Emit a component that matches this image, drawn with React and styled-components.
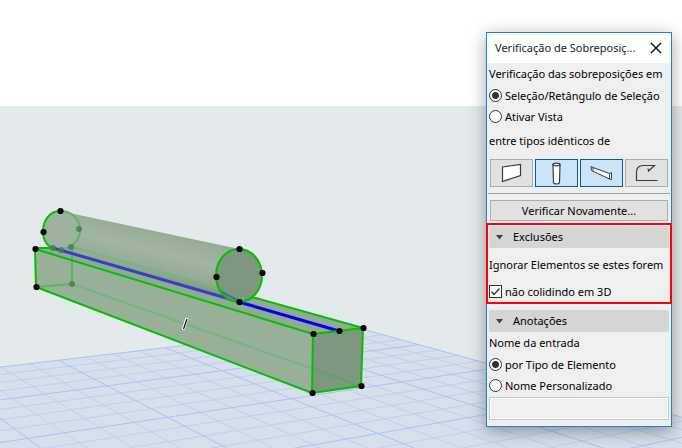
import React, { useState } from "react";
import styled, { createGlobalStyle } from "styled-components";

const GlobalStyle = createGlobalStyle`
  * { box-sizing: border-box; }
  body {
    margin: 0;
    background: #fff;
    color: #000;
    font: 11px/16px "Noto Sans", "Open Sans", sans-serif;
  }
  button, input { font: inherit; color: inherit; }
`;

const Page = styled.main`
  position: relative;
  min-height: 100vh;
  padding-top: 106px;
  overflow: hidden;
  display: flex;
`;

const Viewport = styled.section`
  flex: 1;
  display: flex;
  background: #e4e9eb;
`;

const Drawing = styled.svg`
  flex: 1;
  width: 100%;
  display: block;
`;

const Palette = styled.aside`
  position: absolute;
  top: 32px;
  right: 10px;
  width: 186px;
  padding-bottom: 6px;
  background: #efefef;
  border: 1px solid #1883d7;
  box-shadow: 0 4px 16px rgba(0, 0, 0, 0.36);
`;

const TitleBar = styled.header`
  display: flex;
  align-items: center;
  justify-content: space-between;
  height: 30px;
  padding: 0 8px;
  background: #fff;
`;

const Title = styled.h1`
  margin: 0;
  color: #222;
  font: 400 11px/16px "Noto Sans", "Open Sans", sans-serif;
  white-space: nowrap;
`;

const CloseButton = styled.button`
  display: grid;
  place-items: center;
  width: 14px;
  height: 14px;
  padding: 0;
  border: 0;
  background: none;
`;

const Group = styled.fieldset`
  min-width: 0;
  margin: 0;
  padding: 0 ${(p) => (p.$inset === undefined ? 2 : p.$inset)}px;
  border: 0;
`;

const Caption = styled.div`
  display: flex;
  align-items: center;
  height: ${(p) => p.$height || 23}px;
  white-space: nowrap;
`;

const Option = styled.label`
  display: flex;
  align-items: center;
  gap: 3px;
  height: 21px;
  white-space: nowrap;
`;

const Radio = styled.input`
  appearance: none;
  flex: none;
  width: 13px;
  height: 13px;
  margin: 0;
  border: 1px solid #333;
  border-radius: 50%;
  background: #fff;
  &:checked { background: radial-gradient(circle, #333 3px, #fff 4px); }
`;

const CheckFrame = styled.span`
  display: grid;
  flex: none;
  width: 13px;
  height: 13px;
  > * { grid-area: 1 / 1; }
  svg { pointer-events: none; z-index: 1; }
  input:not(:checked) + svg { display: none; }
`;

const Checkbox = styled.input`
  appearance: none;
  width: 13px;
  height: 13px;
  margin: 0;
  border: 1px solid #333;
  background: #fff;
`;

const Tools = styled.div`
  display: grid;
  grid-template-columns: repeat(4, 1fr);
  gap: 2px;
  padding: 4px 3px 6px;
`;

const Tool = styled.button`
  display: grid;
  place-items: center;
  height: 28px;
  padding: 0;
  border: 1px solid ${(p) => (p.$on ? "#0a5a9c" : "#adadad")};
  background: ${(p) => (p.$on ? "#cce4f8" : "#e1e1e1")};
`;

const Divider = styled.hr`
  height: 1px;
  margin: 0 1px 6px;
  border: 0;
  background: #a0a0a0;
`;

const CheckAgain = styled.button`
  display: block;
  width: calc(100% - 6px);
  height: 21px;
  margin: 0 3px 2px;
  padding: 0;
  border: 1px solid #adadad;
  background: #e1e1e1;
`;

const Highlight = styled.section`
  position: relative;
  margin: 0 -1px 6px;
  padding: 1px 0 0;
  border: 2px solid #f00;
`;

const SectionHead = styled.button`
  display: flex;
  align-items: center;
  gap: 10px;
  width: calc(100% - ${(p) => p.$inset * 2}px);
  height: 22px;
  margin: 0 ${(p) => p.$inset}px;
  padding: 0 7px;
  border: 0;
  border-radius: 2px;
  background: #d5d5d5;
`;

const NameField = styled.input`
  display: block;
  width: 100%;
  height: 23px;
  margin-top: 1px;
  padding: 0 4px;
  border: 1px solid #c6c6c6;
  box-shadow: inset 0 0 0 1px #fff;
  background: #efefef;
`;

/* Perspective ground plane: s runs towards the viewer, t runs to the right. */
const depth = (s, t) => 1 - 0.1887 * s + 0.05 * t;
const project = (s, t) => {
  const w = depth(s, t);
  return [(77.75 * s + 115 * t + 58.3) / w, (-21.76 * s + 4.8 * t + 360.3) / w];
};

function gridLines() {
  const lines = [];
  for (let i = 0; i <= 32; i++) {
    const s = i / 8;
    const start = Math.max(-4, (0.15 - 1 + 0.1887 * s) / 0.05);
    lines.push({ key: `a${i}`, bold: i % 4 === 0, from: project(s, start), to: project(s, 3) });
  }
  for (let j = -14; j <= 12; j++) {
    const t = j / 4;
    const end = (1 + 0.05 * t - 0.15) / 0.1887;
    lines.push({ key: `b${j}`, bold: j % 4 === 0, from: project(0, t), to: project(end, t) });
  }
  return lines.sort((a, b) => a.bold - b.bold);
}

const GRID = gridLines();
const GROUND = [project(0, -4), project(0, 3), project(3.5, 3), [682, 900], [-400, 900]]
  .map((p) => p.join(","))
  .join(" ");

const NODES = [
  [60, 211], [43, 232], [35, 249], [36, 287], [239, 249], [216, 277], [262, 273],
  [239, 302], [313, 334], [339, 331], [363, 328], [312, 393], [361, 386],
];
const HIDDEN_NODES = [[79, 229], [71, 247], [72, 284], [53, 248], [61, 250]];

function Scene() {
  return (
    <Drawing viewBox="0 106 682 342" preserveAspectRatio="xMinYMin slice" role="img" aria-label="Vista 3D">
      <defs>
        <linearGradient id="tube" gradientUnits="userSpaceOnUse" x1="150" y1="226" x2="138" y2="278">
          <stop offset="0" stopColor="#8fa38f" />
          <stop offset="0.14" stopColor="#99af9a" />
          <stop offset="0.45" stopColor="#a0b6a0" />
          <stop offset="0.78" stopColor="#95ab96" />
          <stop offset="1" stopColor="#7e947f" />
        </linearGradient>
      </defs>
      <polygon points={GROUND} fill="#d6dfeb" />
      <g strokeWidth="1">
        {GRID.map((l) => (
          <line
            key={l.key}
            x1={l.from[0]}
            y1={l.from[1]}
            x2={l.to[0]}
            y2={l.to[1]}
            stroke={l.bold ? "#aac3ef" : "#c0d0ea"}
          />
        ))}
      </g>
      <polygon points="35,249 71,247 363,328 361,386 312,393 36,287" fill="#98af98" />
      <polygon points="35,249 71,247 363,328 313,334" fill="#92a994" />
      <polygon points="313,334 363,328 361,386 312,393" fill="#80977f" />
      <path d="M60 211L239 249L239 302L54 248C48 247 43 241 43 232C43 220 50 211 60 211Z" fill="url(#tube)" />
      <path d="M60 211C50 211 43 220 43 232C43 241 48 247 54 248L62 250C74 248 80 239 80 230C80 219 72 211 60 211Z" fill="#9db39e" />
      <g fill="none" stroke="#5fb364" strokeWidth="2">
        <path d="M60 211C72 211 80 219 80 230C80 239 74 247 62 249" />
        <path d="M72 247V284L36 287" />
      </g>
      <path d="M72 247L254 298M72 284L313 369" fill="none" stroke="#79b47c" strokeWidth="2" />
      <path d="M313 369L361 386" stroke="#659f67" strokeWidth="2" />
      <path d="M53 248L240 302" stroke="#3441c4" strokeWidth="3" />
      <path d="M239 302L339 331" stroke="#0000fa" strokeWidth="3" />
      <ellipse cx="239" cy="275.5" rx="23" ry="26.5" fill="#80977f" />
      <path d="M220 291L239 301" stroke="#52679a" strokeWidth="2" />
      <path d="M217 287L254 298" stroke="#6d9f70" strokeWidth="2" />
      <g fill="none" stroke="#00c000" strokeWidth="2" strokeLinejoin="round">
        <path d="M60 211C50 211 43 220 43 232C43 241 48 247 54 248H35V249L36 287L312 393L313 334L35 249" />
        <path d="M313 334L363 328L361 386L312 393M363 328L252 297" />
        <ellipse cx="239" cy="275.5" rx="23" ry="26.5" />
      </g>
      {HIDDEN_NODES.map(([x, y]) => (
        <circle key={`${x}-${y}`} cx={x} cy={y} r="3" fill="#4c794f" fillOpacity="0.8" />
      ))}
      {NODES.map(([x, y]) => (
        <circle key={`${x}-${y}`} cx={x + 0.5} cy={y} r="3.1" fill="#000" />
      ))}
      <path d="M183 330L187 318" stroke="#fff" strokeWidth="3" />
      <path d="M183.5 329L187 319" stroke="#000" strokeWidth="1.2" />
    </Drawing>
  );
}

const TOOLS = [
  { name: "Parede", on: false, art: <path d="M3.5 7L21.5 4.5V15.500L3.500 21.500Z" fill="#fff" /> },
  {
    name: "Pilar",
    on: true,
    art: (
      <>
        <path d="M9 4.500L9.500 22.500C10 24.500 15 24.500 15.500 22.500L16 4.500Z" fill="#fff" />
        <ellipse cx="12.500" cy="4.500" rx="3.500" ry="1.300" fill="#fff" />
      </>
    ),
  },
  {
    name: "Viga",
    on: true,
    art: (
      <path
        d="M2 6.500L4 7.500L20.500 13.500L22.500 12.500V19.500L20.500 19L3.500 11L2.500 10.500ZM20.500 13.500V19M4 7.500V11"
        fill="#fff"
        strokeWidth="1"
      />
    ),
  },
  {
    name: "Laje",
    on: false,
    art: <path d="M23.500 20.500H2.500V12C2.500 8 5 5.500 9 5.500H20.500L14.500 11L14 8.500" fill="none" />,
  },
];

function ToolArt({ children }) {
  return (
    <svg width="26" height="26" viewBox="0 0 26 26" stroke="#333c44" strokeWidth="1.200" aria-hidden="true">
      {children}
    </svg>
  );
}

function Heading({ children, inset, open, onToggle }) {
  return (
    <SectionHead type="button" $inset={inset} aria-expanded={open} onClick={onToggle}>
      <svg width="7" height="5" viewBox="0 0 7 5" aria-hidden="true">
        <path d="M0 0H7L3.500 4.500Z" fill="#404040" />
      </svg>
      {children}
    </SectionHead>
  );
}

export default function App() {
  const [tools, setTools] = useState(TOOLS.map((t) => t.on));
  const [exclusions, setExclusions] = useState(true);
  const [notes, setNotes] = useState(true);

  return (
    <>
      <GlobalStyle />
      <Page>
        <Viewport>
          <Scene />
        </Viewport>
        <Palette>
          <TitleBar>
            <Title>Verificação de Sobreposiç...</Title>
            <CloseButton type="button" aria-label="Fechar">
              <svg width="12" height="12" viewBox="0 0 12 12" aria-hidden="true">
                <path d="M1 1L11 11M11 1L1 11" stroke="#000" strokeWidth="1.200" />
              </svg>
            </CloseButton>
          </TitleBar>
          <Group aria-labelledby="scope">
            <Caption $height={22} id="scope">Verificação das sobreposições em</Caption>
            <Option>
              <Radio type="radio" name="scope" defaultChecked />
              Seleção/Retângulo de Seleção
            </Option>
            <Option>
              <Radio type="radio" name="scope" />
              Ativar Vista
            </Option>
            <Caption $height={28} id="types">entre tipos idênticos de</Caption>
          </Group>
          <Tools role="group" aria-labelledby="types">
            {TOOLS.map((tool, i) => (
              <Tool
                key={tool.name}
                type="button"
                aria-label={tool.name}
                aria-pressed={tools[i]}
                $on={tools[i]}
                onClick={() => setTools(tools.map((on, k) => (k === i ? !on : on)))}
              >
                <ToolArt>{tool.art}</ToolArt>
              </Tool>
            ))}
          </Tools>
          <Divider />
          <CheckAgain type="button">Verificar Novamente...</CheckAgain>
          <Highlight>
            <Heading inset={1} open={exclusions} onToggle={() => setExclusions(!exclusions)}>
              Exclusões
            </Heading>
            {exclusions && (
              <Group $inset={1} aria-labelledby="ignore">
                <Caption $height={33} id="ignore">Ignorar Elementos se estes forem</Caption>
                <Option>
                  <CheckFrame>
                    <Checkbox type="checkbox" defaultChecked />
                    <svg width="13" height="13" viewBox="0 0 13 13" aria-hidden="true">
                      <path d="M2.500 6.500L5 9.500L10.500 3.500" fill="none" stroke="#333" strokeWidth="1.300" />
                    </svg>
                  </CheckFrame>
                  não colidindo em 3D
                </Option>
              </Group>
            )}
          </Highlight>
          <Heading inset={2} open={notes} onToggle={() => setNotes(!notes)}>
            Anotações
          </Heading>
          {notes && (
            <Group aria-labelledby="entry">
              <Caption $height={22} id="entry">Nome da entrada</Caption>
              <Option>
                <Radio type="radio" name="entry" defaultChecked />
                por Tipo de Elemento
              </Option>
              <Option>
                <Radio type="radio" name="entry" />
                Nome Personalizado
              </Option>
              <NameField type="text" aria-label="Nome Personalizado" />
            </Group>
          )}
        </Palette>
      </Page>
    </>
  );
}
